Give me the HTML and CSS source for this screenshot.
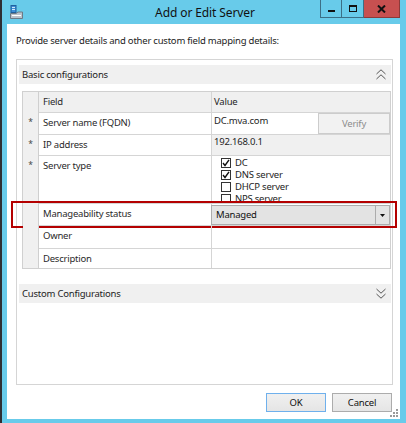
FILE: index.html
```html
<!DOCTYPE html>
<html>
<head>
<meta charset="utf-8">
<link rel="stylesheet" href="styles.css">
</head>
<body>
<div class="window">
  <div class="titlebar">
    <div class="tb-left">
      <svg class="appicon" width="13" height="14" viewBox="0 0 13 14">
        <rect x="1" y="0.5" width="5" height="7" fill="#3d8fd6" stroke="#1f5f9e" stroke-width="1"/>
        <rect x="2" y="2" width="3" height="1" fill="#cfe6fa"/>
        <rect x="2" y="4" width="3" height="1" fill="#cfe6fa"/>
        <path d="M0.5 13.5 V8.5 H6 L8 7 H12.5 V13.5 Z" fill="#b9c3cc" stroke="#6c7a86" stroke-width="1"/>
        <rect x="2" y="10" width="9" height="1" fill="#ffffff"/>
      </svg>
    </div>
    <div class="title">Add or Edit Server</div>
    <div class="controls">
      <div class="ctl min"><span class="min-glyph"></span></div>
      <div class="ctl max"><span class="max-glyph"></span></div>
      <div class="ctl close">
        <svg width="9" height="8" viewBox="0 0 9 8"><path d="M1 0.5 L8 7.5 M8 0.5 L1 7.5" stroke="#111" stroke-width="2"/></svg>
      </div>
    </div>
  </div>
  <div class="frame">
    <div class="client">
      <p class="intro">Provide server details and other custom field mapping details:</p>
      <div class="group">
        <div class="band">
          <span>Basic configurations</span>
          <svg width="10" height="11" viewBox="0 0 10 11"><path d="M0.5 5 L5 0.8 L9.5 5 M0.5 10 L5 5.8 L9.5 10" fill="none" stroke="#555" stroke-width="1"/></svg>
        </div>
        <div class="grid">
          <div class="row hdr h21">
            <div class="mk"></div>
            <div class="f">Field</div>
            <div class="v vhdr">Value</div>
          </div>
          <div class="row h22">
            <div class="mk">*</div>
            <div class="f">Server name (FQDN)</div>
            <div class="v vsplit"><span class="val">DC.mva.com</span><span class="verify">Verify</span></div>
          </div>
          <div class="row h21">
            <div class="mk">*</div>
            <div class="f">IP address</div>
            <div class="v ro"><span class="val">192.168.0.1</span></div>
          </div>
          <div class="row h48">
            <div class="mk">*</div>
            <div class="f">Server type</div>
            <div class="v checks">
              <div class="chk"><span class="box on"><svg width="8" height="8" viewBox="0 0 8 8"><path d="M1 4 L3 6.5 L7 0.8" fill="none" stroke="#111" stroke-width="1.4"/></svg></span>DC</div>
              <div class="chk"><span class="box on"><svg width="8" height="8" viewBox="0 0 8 8"><path d="M1 4 L3 6.5 L7 0.8" fill="none" stroke="#111" stroke-width="1.4"/></svg></span>DNS server</div>
              <div class="chk"><span class="box"></span>DHCP server</div>
              <div class="chk"><span class="box"></span>NPS server</div>
            </div>
          </div>
          <div class="row h22 manage">
            <div class="mk"></div>
            <div class="f">Manageability status</div>
            <div class="v vdd">
              <div class="dd"><span class="dd-text">Managed</span><span class="dd-arrow"><svg width="5" height="3" viewBox="0 0 5 3"><path d="M0 0 H5 L2.5 3 Z" fill="#111"/></svg></span></div>
            </div>
            <div class="highlight"></div>
          </div>
          <div class="row h23">
            <div class="mk"></div>
            <div class="f">Owner</div>
            <div class="v"></div>
          </div>
          <div class="row h19 last">
            <div class="mk"></div>
            <div class="f">Description</div>
            <div class="v"></div>
          </div>
        </div>
        <div class="band custom">
          <span>Custom Configurations</span>
          <svg width="10" height="11" viewBox="0 0 10 11"><path d="M0.5 1 L5 5.2 L9.5 1 M0.5 6 L5 10.2 L9.5 6" fill="none" stroke="#555" stroke-width="1"/></svg>
        </div>
      </div>
      <div class="buttons">
        <div class="btn default">OK</div>
        <div class="btn">Cancel</div>
      </div>
      <svg class="grip" width="9" height="9" viewBox="0 0 9 9">
        <g fill="#9a9a9a">
          <rect x="6" y="0" width="2" height="2"/>
          <rect x="3" y="3" width="2" height="2"/><rect x="6" y="3" width="2" height="2"/>
          <rect x="0" y="6" width="2" height="2"/><rect x="3" y="6" width="2" height="2"/><rect x="6" y="6" width="2" height="2"/>
        </g>
      </svg>
    </div>
  </div>
</div>
</body>
</html>
```

FILE: styles.css
```css
* { box-sizing: border-box; }
html, body { margin: 0; padding: 0; }
body {
  width: 406px;
  height: 423px;
  overflow: hidden;
  background: #2e2e33;
  display: flex;
  font-family: "Noto Sans", "Open Sans", sans-serif;
  font-size: 9.5px;
  letter-spacing: -0.22px;
  color: #1e1e1e;
}
.window {
  margin-left: 2px;
  width: 404px;
  height: 423px;
  background: #68cbea;
  display: flex;
  flex-direction: column;
}
.titlebar {
  height: 24px;
  flex: none;
  display: grid;
  grid-template-columns: 1fr auto 1fr;
  align-items: start;
  padding: 0 6px 0 8px;
}
.tb-left { padding-top: 5px; }
.appicon { display: block; }
.title {
  font-size: 12px;
  letter-spacing: -0.1px;
  line-height: 17px;
  padding-top: 4px;
  color: #111;
}
.controls {
  display: flex;
  justify-content: flex-end;
}
.ctl {
  height: 18px;
  display: flex;
  align-items: center;
  justify-content: center;
  border: 1px solid #3c6f86;
  border-top: none;
}
.min, .max { width: 22px; background: #68cbea; }
.max { border-left: none; }
.close { width: 36px; background: #c75050; border-left: none; border-color: #8b3a3a; }
.min-glyph { width: 7px; height: 2px; background: #111; margin-top: 4px; }
.max-glyph { width: 8px; height: 7px; border: 1px solid #111; border-top-width: 2px; }
.frame {
  flex: 1;
  display: flex;
  padding: 0 6px 4px 5px;
}
.client {
  flex: 1;
  background: #fff;
  position: relative;
  padding: 9px 7px 0 9px;
  display: flex;
  flex-direction: column;
}
.intro {
  margin: 0 0 10px 0;
  line-height: 16px;
  color: #222;
}
.group {
  height: 326px;
  border: 1px solid #d5d5d5;
  padding: 5px 1px 0 2px;
  display: flex;
  flex-direction: column;
}
.band {
  height: 19px;
  flex: none;
  background: #f0f0f0;
  display: flex;
  align-items: center;
  justify-content: space-between;
  padding: 0 5px 0 3px;
  color: #222;
}
.band svg { display: block; }
.custom { margin-top: 15px; }
.grid {
  margin: 7px 0 0 3px;
  border: 1px solid #d0d0d0;
  display: flex;
  flex-direction: column;
}
.row { display: flex; position: relative; }
.h19 { height: 19px; }
.h21 { height: 21px; }
.h22 { height: 22px; }
.h23 { height: 23px; }
.h48 { height: 48px; }
.mk {
  width: 16px;
  flex: none;
  background: #f0f0f0;
  border-right: 1px solid #cfcfcf;
  text-align: center;
  padding-top: 3px;
  font-size: 8.5px;
  color: #444;
}
.f {
  width: 173px;
  flex: none;
  border-right: 1px solid #d5d5d5;
  border-bottom: 1px solid #d5d5d5;
  padding: 3px 4px 0 4px;
  line-height: 14px;
  color: #2a2a2a;
}
.v {
  flex: 1;
  border-bottom: 1px solid #d5d5d5;
  line-height: 14px;
  color: #1e1e1e;
}
.last .f, .last .v { border-bottom: none; }
.hdr .f, .hdr .v { background: #f0f0f0; }
.vhdr { padding: 3px 0 0 2px; }
.vsplit { display: flex; justify-content: space-between; }
.val { padding: 1px 0 0 2px; }
.ro { background: #f0f0f0; }
.verify {
  width: 72px;
  height: 21px;
  border: 1px solid #cccccc;
  background: #f2f2f2;
  color: #8d8d8d;
  text-align: center;
  line-height: 19px;
}
.checks {
  padding: 1px 0 0 9px;
  overflow: hidden;
}
.chk {
  height: 12px;
  display: flex;
  align-items: center;
  line-height: 12px;
}
.box {
  width: 10px;
  height: 10px;
  border: 1px solid #333;
  background: #fff;
  margin-right: 4px;
  display: flex;
  align-items: center;
  justify-content: center;
}
.vdd { padding-top: 1px; }
.dd {
  margin-left: -1px;
  height: 20px;
  background: #e3e3e3;
  border: 1px solid #acacac;
  display: flex;
  align-items: stretch;
}
.dd-text { flex: 1; padding-left: 4px; line-height: 17px; color: #111; }
.dd-arrow {
  width: 14px;
  border-left: 1px solid #acacac;
  display: flex;
  align-items: center;
  justify-content: center;
}
.dd-arrow svg { display: block; }
.highlight {
  position: absolute;
  left: -12px;
  top: -3px;
  width: 386px;
  height: 27px;
  border: 2px solid #b40000;
  pointer-events: none;
}
.buttons {
  margin-top: 8px;
  display: flex;
  justify-content: flex-end;
  gap: 6px;
  padding-right: 1px;
}
.btn {
  width: 60px;
  height: 19px;
  border: 1px solid #acacac;
  background: linear-gradient(#f0f0f0, #e5e5e5);
  text-align: center;
  line-height: 17px;
  color: #111;
}
.btn.default { border-color: #6fb0ec; }
.grip {
  position: absolute;
  right: 1px;
  bottom: 1px;
}
```
